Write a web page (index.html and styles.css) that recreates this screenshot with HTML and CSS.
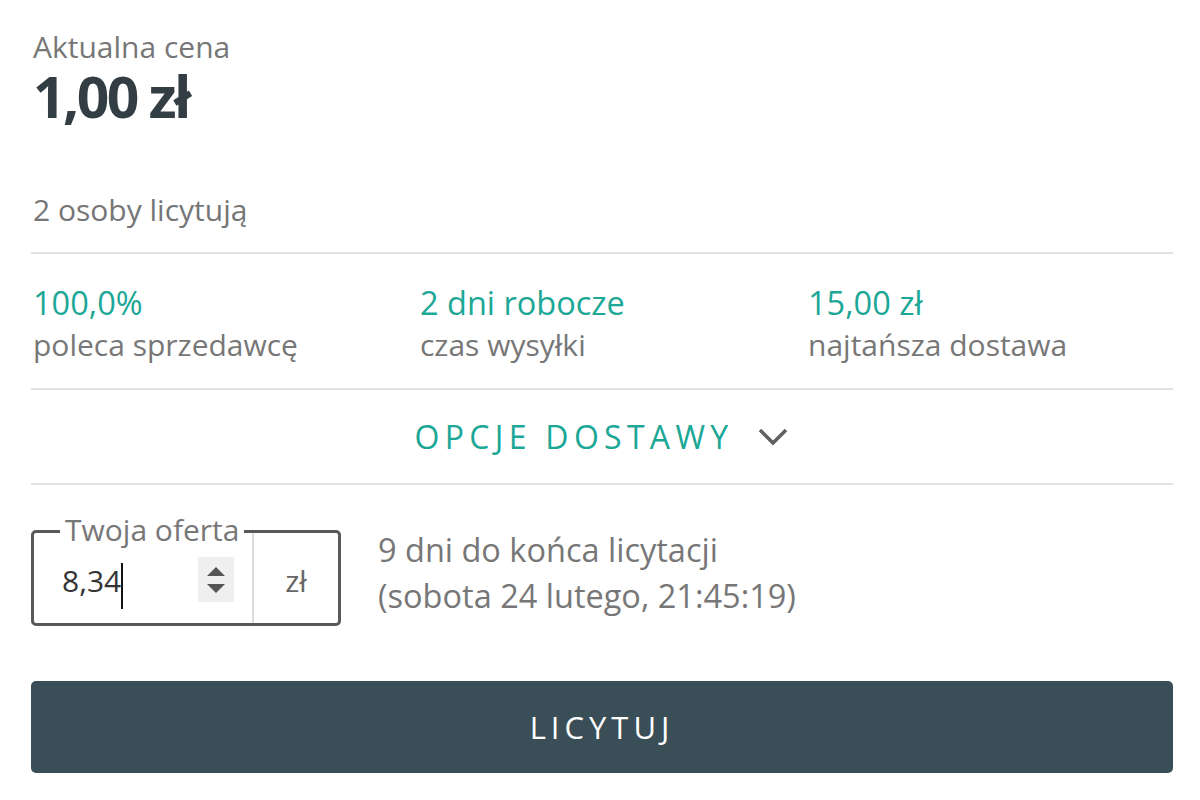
FILE: index.html
```html
<!DOCTYPE html>
<html lang="pl">
<head>
<meta charset="utf-8">
<title>Licytacja</title>
<link rel="stylesheet" href="styles.css">
</head>
<body>
<div class="panel">
  <div class="price-block">
    <div class="price-label">Aktualna cena</div>
    <div class="price">1,00 zł</div>
  </div>
  <div class="bidders">2 osoby licytują</div>
  <div class="stats">
    <div class="stat">
      <div class="stat-value">100,0%</div>
      <div class="stat-label">poleca sprzedawcę</div>
    </div>
    <div class="stat">
      <div class="stat-value">2 dni robocze</div>
      <div class="stat-label">czas wysyłki</div>
    </div>
    <div class="stat">
      <div class="stat-value">15,00 zł</div>
      <div class="stat-label">najtańsza dostawa</div>
    </div>
  </div>
  <div class="delivery">
    <span class="delivery-text">OPCJE DOSTAWY</span>
    <svg class="chevron" width="32" height="20" viewBox="0 0 32 20"><path d="M3 3 L16 16 L29 3" fill="none" stroke="#606060" stroke-width="3.5"/></svg>
  </div>
  <div class="bid-row">
    <div class="bid-field">
      <span class="bid-legend">Twoja oferta</span>
      <div class="bid-input">
        <span class="bid-value">8,34</span><span class="caret"></span>
        <span class="spinner">
          <svg width="36" height="45" viewBox="0 0 36 45"><path d="M9 19 L18 10 L27 19 Z M9 27 L27 27 L18 36 Z" fill="#555"/></svg>
        </span>
      </div>
      <div class="bid-unit">zł</div>
    </div>
    <div class="bid-info">
      <div>9 dni do końca licytacji</div>
      <div>(sobota 24 lutego, 21:45:19)</div>
    </div>
  </div>
  <button class="bid-button">LICYTUJ</button>
</div>
</body>
</html>
```

FILE: styles.css
```css
html, body {
  margin: 0;
  padding: 0;
  background: #fff;
}
body {
  font-family: "Open Sans", "Noto Sans", sans-serif;
  color: #767676;
}
.panel {
  width: 1142px;
  margin-left: 31px;
  padding-top: 28px;
}
.price-block {
  padding-left: 2px;
}
.price-label {
  font-size: 30px;
  line-height: 38px;
  color: #777;
}
.price {
  font-size: 57px;
  font-weight: 700;
  line-height: 60px;
  color: #333d44;
  letter-spacing: -2.6px;
}
.bidders {
  padding-left: 2px;
  margin-top: 63px;
  font-size: 30px;
  line-height: 42px;
  padding-bottom: 21px;
  border-bottom: 2px solid #e2e2e2;
}
.stats {
  display: grid;
  grid-template-columns: 387px 388px 1fr;
  padding: 28px 0 22px 2px;
  border-bottom: 2px solid #e2e2e2;
}
.stat-value {
  font-size: 32.5px;
  line-height: 42px;
  color: #1ca796;
}
.stat-label {
  font-size: 30px;
  line-height: 42px;
  color: #777;
}
.delivery {
  display: flex;
  justify-content: center;
  align-items: center;
  gap: 24px;
  height: 93px;
  border-bottom: 2px solid #e2e2e2;
}
.delivery-text {
  font-size: 32px;
  letter-spacing: 5.3px;
  color: #1ca796;
}
.bid-row {
  display: flex;
  align-items: flex-start;
  margin-top: 42px;
  gap: 37px;
}
.bid-field {
  position: relative;
  display: flex;
  width: 310px;
  height: 96px;
  margin-top: 3px;
  box-sizing: border-box;
  border: 3px solid #595959;
  border-radius: 5px;
}
.bid-legend {
  position: absolute;
  top: -21px;
  left: 26px;
  padding: 0 5px;
  background: #fff;
  font-size: 30px;
  line-height: 36px;
  color: #777;
}
.bid-input {
  flex: 1;
  display: flex;
  align-items: center;
  padding-left: 28px;
  padding-top: 4px;
  border-right: 2px solid #dcdcdc;
}
.bid-value {
  font-size: 30px;
  color: #333;
}
.caret {
  width: 2px;
  height: 46px;
  background: #111;
  margin-top: 12px;
}
.spinner {
  margin-left: auto;
  margin-right: 18px;
  margin-top: -2px;
  width: 36px;
  height: 45px;
  background: #efefef;
  display: flex;
}
.bid-unit {
  width: 84px;
  display: flex;
  align-items: center;
  justify-content: center;
  font-size: 30px;
  color: #666;
  padding-top: 4px;
}
.bid-info {
  font-size: 32.5px;
  line-height: 46px;
  color: #777;
}
.bid-button {
  display: block;
  width: 100%;
  height: 92px;
  margin-top: 55px;
  border: none;
  border-radius: 5px;
  background: #3a4e57;
  color: #fff;
  font-family: "Open Sans", "Noto Sans", sans-serif;
  font-size: 31px;
  letter-spacing: 5px;
}
```
